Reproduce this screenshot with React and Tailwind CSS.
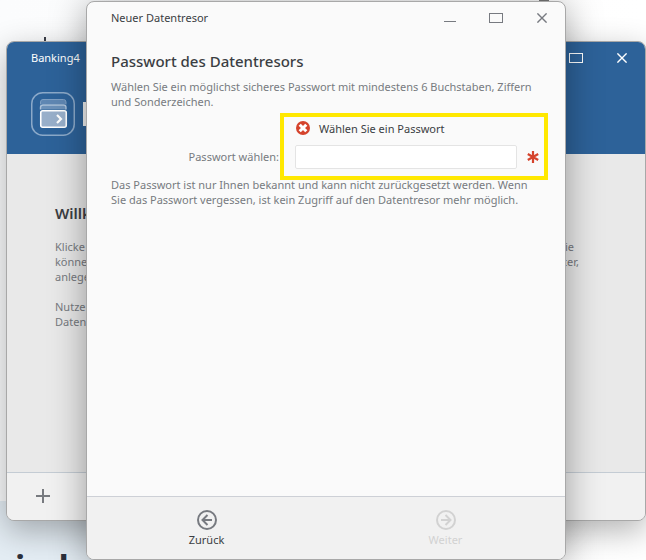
import React from "react";

function MaximizeIcon() {
  return (
    <svg width="14" height="10" viewBox="0 0 14 10" fill="none" stroke="currentColor">
      <rect x="0.5" y="0.5" width="13" height="9" />
    </svg>
  );
}

function CloseIcon() {
  return (
    <svg width="10" height="10" viewBox="0 0 10 10" fill="none" stroke="currentColor" strokeWidth="1.4">
      <path d="M0.4 0.4L9.6 9.6M9.6 0.4L0.4 9.6" />
    </svg>
  );
}

function MinimizeIcon() {
  return (
    <svg width="12" height="10" viewBox="0 0 12 10" fill="none" stroke="currentColor">
      <path d="M0 8.5H12" />
    </svg>
  );
}

function WindowButtons() {
  return (
    <div className="flex">
      <button type="button" aria-label="Minimieren" className="flex h-8 w-[46px] items-center justify-center">
        <MinimizeIcon />
      </button>
      <button type="button" aria-label="Maximieren" className="flex h-8 w-[46px] items-center justify-center">
        <MaximizeIcon />
      </button>
      <button type="button" aria-label="Schließen" className="flex h-8 w-[46px] items-center justify-center">
        <CloseIcon />
      </button>
    </div>
  );
}

function AppLogo() {
  return (
    <svg width="44" height="44" viewBox="0 0 44 44" fill="none">
      <rect x="0.75" y="0.75" width="42.5" height="42.5" rx="11" stroke="#8ba9c9" strokeWidth="1.5" />
      <path d="M9.5 12V10a2.500 2.500 0 0 1 2.500-2.500h20.500a2.500 2.500 0 0 1 2.500 2.500v2z" fill="#5f87b3" />
      <path d="M9.5 12.500V10a2.500 2.500 0 0 1 2.500-2.500h20.500a2.500 2.500 0 0 1 2.500 2.500v2.500" stroke="#7e9fc3" />
      <path d="M9.500 17.500V15.500a2.500 2.500 0 0 1 2.500-2.500h20.500a2.500 2.500 0 0 1 2.500 2.500v2" fill="#6c91b9" stroke="#adc2d9" strokeWidth="1.400" />
      <rect x="9.750" y="18.750" width="25.500" height="16.500" rx="2" fill="#98afca" stroke="#fff" strokeWidth="1.600" />
      <path d="M26 23l4 4-4 4" stroke="#fff" strokeWidth="2.200" />
    </svg>
  );
}

function BankingWindow() {
  return (
    <section className="absolute top-[41px] right-0 left-[6px] flex h-[480px] flex-col overflow-hidden rounded-lg border border-[#a8a8a8] bg-[#e9e9e9] shadow-[0_10px_32px_rgba(0,0,0,0.3)]">
      <header className="h-28 shrink-0 bg-[#2d6299] text-white">
        <div className="flex h-8 items-center justify-between pl-6">
          <span>Banking4</span>
          <WindowButtons />
        </div>
        <div className="flex items-center gap-2 pt-[18px] pl-6">
          <AppLogo />
          <div className="h-6 w-40 bg-[#f1f1f1]" />
        </div>
      </header>
      <main className="flex grow justify-between pt-[49px] pr-[66px] pl-12 leading-[15px] text-[#777a7f]">
        <div className="whitespace-nowrap">
          <h1 className="mb-4 text-[15px] leading-5 font-semibold text-[#3b3e43]">Willk</h1>
          <p>
            Klicke
            <br />
            könne
            <br />
            anlege
          </p>
          <p className="mt-[15px]">
            Nutze
            <br />
            Datent
          </p>
        </div>
        <p className="pt-9 text-right">
          <span className="block pr-[5px]">ie</span>
          <span className="block">ter,</span>
        </p>
      </main>
      <footer className="flex h-12 shrink-0 items-center border-t border-[#c4ccd4] bg-[#f1f1f1] pb-0.5 pl-7">
        <button type="button" aria-label="Hinzufügen" className="text-[#777a7f]">
          <svg width="16" height="16" viewBox="0 0 16 16" stroke="currentColor" strokeWidth="2">
            <path d="M1 8H15M8 1V15" />
          </svg>
        </button>
      </footer>
    </section>
  );
}

function ErrorIcon() {
  return (
    <svg width="14" height="14" viewBox="0 0 14 14">
      <circle cx="7" cy="7" r="7" fill="#d5432c" />
      <path d="M3.700 3.700L10.300 10.300M10.300 3.700L3.700 10.300" stroke="#fff" strokeWidth="3" />
    </svg>
  );
}

function RequiredIcon() {
  return (
    <svg width="12" height="12" viewBox="0 0 12 12" stroke="#d5432c" strokeWidth="2.200">
      <path d="M6 0V12M0.800 3L11.200 9M11.200 3L0.800 9" />
    </svg>
  );
}

function CircleArrow({ direction }) {
  return (
    <svg width="20" height="20" viewBox="0 0 20 20" fill="none" stroke="currentColor" strokeWidth="2">
      <circle cx="10" cy="10" r="9" />
      {direction === "left" ? (
        <path d="M15 10H5.500M10.500 5L5.500 10L10.500 15" />
      ) : (
        <path d="M5 10H14.500M9.500 5L14.500 10L9.500 15" />
      )}
    </svg>
  );
}

function PasswordDialog() {
  return (
    <section
      role="dialog"
      aria-labelledby="dialog-title"
      className="absolute top-px right-20 bottom-0 left-[86px] flex flex-col overflow-hidden rounded-lg border border-[#a8a8a8] bg-[#fafafa] shadow-[0_4px_36px_rgba(0,0,0,0.36)]"
    >
      <header className="flex h-8 shrink-0 items-center justify-between pl-6 text-[#777a80]">
        <span className="text-[#3b3e43]">Neuer Datentresor</span>
        <WindowButtons />
      </header>
      <form className="flex grow flex-col">
        <div className="grow pt-[17px] pr-[17px] pl-6 leading-[15px] text-[#777a7f]">
          <h2 id="dialog-title" className="text-[15px] leading-5 font-medium text-[#3b3e43]">
            Passwort des Datentresors
          </h2>
          <p className="mt-2">
            Wählen Sie ein möglichst sicheres Passwort mit mindestens 6 Buchstaben, Ziffern
            <br />
            und Sonderzeichen.
          </p>
          <div className="mt-1 flex justify-end">
            <label htmlFor="password" className="pt-9 pr-px whitespace-nowrap">
              Passwort wählen:
            </label>
            <div className="h-[67px] w-[268px] border-4 border-[#ffe800] pt-[3px] pl-[11px]">
              <div className="flex h-4 items-center gap-[9px] pl-px text-[#3b3e43]">
                <ErrorIcon />
                <span id="password-error">Wählen Sie ein Passwort</span>
              </div>
              <div className="mt-[9px] flex items-center gap-[10px]">
                <input
                  id="password"
                  type="password"
                  aria-describedby="password-error"
                  className="h-6 w-[222px] rounded-xs border border-[#e4e4e4] bg-white px-2 outline-none"
                />
                <RequiredIcon />
              </div>
            </div>
          </div>
          <p className="-mt-[3px]">
            Das Passwort ist nur Ihnen bekannt und kann nicht zurückgesetzt werden. Wenn
            <br />
            Sie das Passwort vergessen, ist kein Zugriff auf den Datentresor mehr möglich.
          </p>
        </div>
        <footer className="flex h-[63px] shrink-0 justify-around border-t border-[#cdd0d6] bg-[#f1f1f1] pt-[13px]">
          <button type="button" className="flex w-20 flex-col items-center gap-0.5 text-[#777a80]">
            <CircleArrow direction="left" />
            <span className="text-[#3b3e43]">Zurück</span>
          </button>
          <button type="submit" disabled className="flex w-20 flex-col items-center gap-0.5 text-[#d2d2d2]">
            <CircleArrow direction="right" />
            <span>Weiter</span>
          </button>
        </footer>
      </form>
    </section>
  );
}

function PageBehind() {
  return (
    <div className="flex h-full flex-col">
      <div className="flex h-[41px] justify-between pr-[97px] pl-11">
        <span className="h-1 w-0.5 self-end bg-[#3b3e48]" />
        <span className="h-0.5 w-[10px] bg-[#777]" />
      </div>
      <div className="grow" />
      <div className="h-[59px] w-1/2 overflow-hidden bg-[#e4edf4] pt-12 pl-[15px] text-[34px] leading-9 font-bold text-[#2c303c]">
        ind
      </div>
    </div>
  );
}

export default function App() {
  return (
    <div className="relative h-screen min-h-[540px] overflow-hidden bg-linear-to-r from-[#fbfcfd] to-white font-['Noto_Sans',sans-serif] text-[11px] leading-4">
      <PageBehind />
      <BankingWindow />
      <PasswordDialog />
    </div>
  );
}
